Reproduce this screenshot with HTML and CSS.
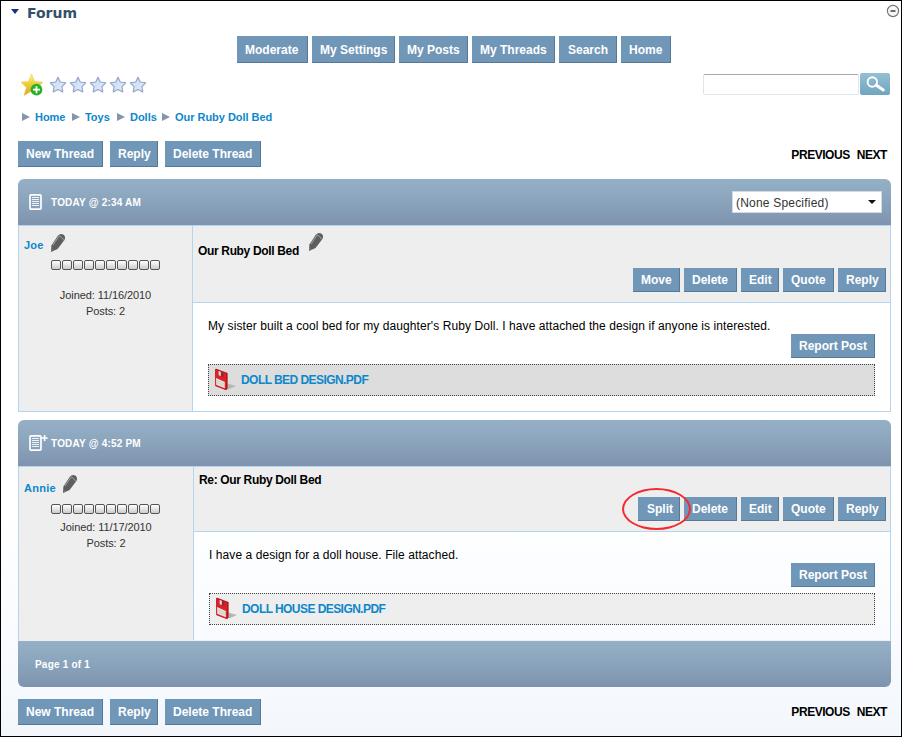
FILE: index.html
```
<!DOCTYPE html>
<html lang="en">
<head>
<meta charset="utf-8">
<title>Forum</title>
<link rel="stylesheet" href="styles.css">
</head>
<body>
<svg class="defs" aria-hidden="true">
  <defs>
    <linearGradient id="gold" x1="0" y1="0" x2="0" y2="1"><stop offset="0" stop-color="#fff3a0"/><stop offset=".45" stop-color="#efcf35"/><stop offset="1" stop-color="#dba520"/></linearGradient>
    <linearGradient id="pale" x1="0" y1="0" x2="1" y2="1"><stop offset="0" stop-color="#c6d7ef"/><stop offset="1" stop-color="#e6eefa"/></linearGradient>
    <symbol id="star" viewBox="0 0 18 18"><path d="M9 1.2 11.3 6 16.7 6.8 12.9 10.6 13.8 16 9 13.5 4.2 16 5.1 10.6 1.3 6.8 6.7 6Z" fill="url(#pale)" stroke="#8fa3cb" stroke-width="1.1" stroke-linejoin="round"/></symbol>
    <symbol id="pencil" viewBox="0 0 16 20"><path d="M1 19 1.4 12.6 8 2.6Q10.5-.2 13.6 1.8 16 3.8 14.4 7L7.6 16Z" fill="#5e5e5e"/><path d="M8.2 2.8Q12 3.4 13.8 7.4M3 12 8.6 3.8" fill="none" stroke="#aaa" stroke-width=".9"/><path d="M1.2 15.5 3.8 17.2 1 19Z" fill="#777"/></symbol>
    <symbol id="disk" viewBox="0 0 24 24"><path d="M13 15.5 22 18 14 21.5Z" fill="#b5b5b5"/><path d="M1 1.2 2.2.8 13.6 5V20.6L12.2 22.2 1.4 18Z" fill="#b8141c"/><path d="M1 1.6 12 5.6V22L1.4 18Z" fill="#dc2129"/><path d="M4.6 3 9.6 4.9V9.2L4.6 7.2Z" fill="#8e2c31"/><path d="M4.6 3 6.8 3.8V8L4.6 7.2Z" fill="#e9dcdc"/><path d="M2 10 10.8 14V20.2L2.2 16.8Z" fill="#e6e6e0"/><path d="M2 12.2 10.8 16M2 14.4 10.8 18" stroke="#bdbdb8" stroke-width=".7"/></symbol>
    <symbol id="page" viewBox="0 0 20 18"><rect x="2" y="1.9" width="11" height="14.2" rx="1" fill="none" stroke="#fff" stroke-width="1.7"/><path d="M4 4.5h7M4 6.5h7M4 8.5h7M4 10.5h7M4 12.5h7" stroke="#eef3f8" stroke-width="1"/></symbol>
  </defs>
</svg>
<header class="module-title">
  <span class="toggle"></span><h1>Forum</h1>
  <svg class="minimize" viewBox="0 0 14 14"><circle cx="7" cy="7" r="5.6" fill="#f7f7f7" stroke="#777" stroke-width="1.2"/><path d="M4.5 7h5" stroke="#222" stroke-width="1.3"/></svg>
</header>
<nav class="menu">
  <a class="btn w71">Moderate</a><a class="btn w83">My Settings</a><a class="btn w69">My Posts</a><a class="btn w83">My Threads</a><a class="btn w58 search-link">Search</a><a class="btn w50">Home</a>
</nav>
<div class="tools">
  <div class="rating">
    <svg class="favorite" viewBox="0 0 24 24"><path d="M11.5 1 14.6 8.6 23 9.2 16.7 14.5 18.4 22 11.5 18.1 4 22.5 6.4 14.5 1 9.2 8.5 8.6Z" fill="url(#gold)" stroke="#e7c94c" stroke-width=".6"/><circle cx="16.5" cy="16.7" r="5.9" fill="#27b028"/><path d="M16.5 13.2v7M13 16.7h7" stroke="#fff" stroke-width="1.8"/></svg>
    <svg class="star"><use href="#star"/></svg><svg class="star"><use href="#star"/></svg><svg class="star"><use href="#star"/></svg><svg class="star"><use href="#star"/></svg><svg class="star"><use href="#star"/></svg>
  </div>
  <div class="search"><input type="text" aria-label="Search"><button aria-label="Go"><svg viewBox="0 0 30 22"><circle cx="12.3" cy="9" r="4.7" fill="none" stroke="#fff" stroke-width="1.9"/><path d="M16.4 12.2 23.3 17" stroke="#fff" stroke-width="3" stroke-linecap="round"/></svg></button></div>
</div>
<div class="crumbs"><a class="c1">Home</a><a class="c2">Toys</a><a class="c3">Dolls</a><a>Our Ruby Doll Bed</a></div>
<div class="actions">
  <a class="btn w85">New Thread</a><a class="btn w48">Reply</a><a class="btn w96">Delete Thread</a>
  <div class="pager"><a>PREVIOUS</a><a>NEXT</a></div>
</div>

<article class="post first">
  <div class="bar"><svg class="page"><use href="#page"/></svg><span class="date">TODAY @ 2:34 AM</span><div class="select"><span>(None Specified)</span></div></div>
  <div class="row">
    <aside>
      <div class="author"><a>Joe</a><svg class="pencil"><use href="#pencil"/></svg></div>
      <div class="rank"><i></i><i></i><i></i><i></i><i></i><i></i><i></i><i></i><i></i><i></i></div>
      <p>Joined: 11/16/2010<br>Posts: 2</p>
    </aside>
    <section>
      <div class="head"><div class="subject">Our Ruby Doll Bed<svg class="pencil"><use href="#pencil"/></svg></div>
        <div class="buttons"><a class="btn w47">Move</a><a class="btn w53">Delete</a><a class="btn w38">Edit</a><a class="btn w51">Quote</a><a class="btn w48">Reply</a></div></div>
      <div class="content"><p>My sister built a cool bed for my daughter's Ruby Doll. I have attached the design if anyone is interested.</p><a class="btn w84 report">Report Post</a>
        <div class="file"><svg class="disk"><use href="#disk"/></svg><a>DOLL BED DESIGN.PDF</a></div></div>
    </section>
  </div>
</article>

<article class="post second">
  <div class="bar"><svg class="page" viewBox="0 0 20 18"><use href="#page" width="20" height="18"/><path d="M16.6 1v6M13.6 4h6" stroke="#fff" stroke-width="1.6"/></svg><span class="date">TODAY @ 4:52 PM</span></div>
  <div class="row">
    <aside>
      <div class="author"><a>Annie</a><svg class="pencil"><use href="#pencil"/></svg></div>
      <div class="rank"><i></i><i></i><i></i><i></i><i></i><i></i><i></i><i></i><i></i><i></i></div>
      <p>Joined: 11/17/2010<br>Posts: 2</p>
    </aside>
    <section>
      <div class="head"><div class="subject">Re: Our Ruby Doll Bed</div>
        <div class="buttons"><a class="btn w42">Split<span class="ring"></span></a><a class="btn w53">Delete</a><a class="btn w38">Edit</a><a class="btn w51">Quote</a><a class="btn w48">Reply</a></div></div>
      <div class="content"><p>I have a design for a doll house. File attached.</p><a class="btn w84 report">Report Post</a>
        <div class="file"><svg class="disk"><use href="#disk"/></svg><a>DOLL HOUSE DESIGN.PDF</a></div></div>
    </section>
  </div>
  <div class="bar foot">Page 1 of 1</div>
</article>
<div class="actions bottom">
  <a class="btn w85">New Thread</a><a class="btn w48">Reply</a><a class="btn w96">Delete Thread</a>
  <div class="pager"><a>PREVIOUS</a><a>NEXT</a></div>
</div>
</body>
</html>
```
FILE: styles.css
```
* { box-sizing: border-box; }
body {
  margin: 0; width: 902px; height: 737px; overflow: hidden;
  border: 1px solid #000;
  font: 12px/16px "Liberation Sans", Arial, sans-serif; color: #000;
  background: linear-gradient(#fff 0, #fff 500px, #f9fbfe 640px, #f3f7fc 735px);
}
p, h1 { margin: 0; }
svg { display: block; flex: none; }
.defs { position: absolute; width: 0; height: 0; }

.module-title { display: flex; height: 35px; padding: 0 1px 0 10px; align-items: flex-start; }
.toggle { border: 4px solid transparent; border-top: 5px solid #17357f; border-bottom: 0; margin-top: 8px; }
h1 { font: bold 14px/16px "DejaVu Sans", Verdana, sans-serif; color: #33506b; margin: 4px auto 0 8px; }
.minimize { width: 14px; height: 14px; margin-top: 3px; }

.btn {
  display: block; height: 24px; line-height: 24px; padding-left: 8px; flex: none; white-space: nowrap;
  background: #7197b8; color: #fff; font-weight: bold;
  border-right: 1px solid #587995; border-bottom: 1px solid #587995;
}
.w38 { width: 38px; } .w42 { width: 42px; } .w47 { width: 47px; } .w48 { width: 48px; }
.w50 { width: 50px; } .w51 { width: 51px; } .w53 { width: 53px; } .w58 { width: 58px; }
.w69 { width: 69px; } .w71 { width: 71px; } .w83 { width: 83px; } .w84 { width: 84px; }
.w85 { width: 85px; } .w96 { width: 96px; }

.menu { display: flex; gap: 4px; padding-left: 236px; height: 37px; }
.menu .btn { height: 27px; line-height: 28px; }
.menu .search-link { padding-left: 9px; }

.tools { display: flex; justify-content: space-between; height: 34px; padding: 0 11px 0 19px; }
.rating { display: flex; }
.favorite { width: 24px; height: 24px; margin-right: 4.5px; }
.star { width: 18px; height: 18px; margin: 2.5px 2px 0 0; }
.search { display: flex; gap: 1px; }
.search input { width: 156px; height: 21px; margin: 1px 0 0; padding: 0 4px; border: 1px solid #dfe4ea; border-top-color: #a9a9a9; border-radius: 2px; background: #fff; }
.search button { width: 30px; height: 22px; padding: 0; border: 0; border-radius: 2px; background: linear-gradient(#94bfd3, #70a5bf); }
.search svg { width: 30px; height: 22px; }

.crumbs { display: flex; height: 34px; padding-left: 21px; font-size: 11px; line-height: 21px; font-weight: bold; }
.crumbs a { display: flex; align-items: flex-start; color: #0d87cb; white-space: nowrap; letter-spacing: -.03px; }
.crumbs a::before { content: ""; margin: 6px 5px 0 0; border: 4px solid transparent; border-left: 8px solid #8496ad; border-right: 0; }
.c1, .c2, .c3 { flex: none; }
.c1 { width: 50px; } .c2 { width: 45px; } .c3 { width: 45px; }

.actions { display: flex; gap: 7px; height: 38px; padding: 0 3px 0 17px; }
.actions .btn { height: 26px; line-height: 27px; }
.pager { display: flex; gap: 7px; margin-left: auto; padding-right: 11px; line-height: 29px; font-weight: bold; letter-spacing: -.45px; }

.post { margin-left: 17px; width: 873px; }
.first { height: 241px; }
.bar { display: flex; align-items: center; height: 46px; border-radius: 6px 6px 0 0; padding: 0 9px 0 10px; color: #fff; font-size: 10px; font-weight: bold; background: linear-gradient(#94b0c6, #8ba5bd 45%, #7f93af); }
.page { width: 20px; height: 18px; margin-right: 3px; }
.date { letter-spacing: .2px; padding-top: 2px; }
.select { margin-left: auto; display: flex; align-items: center; justify-content: space-between; width: 150px; height: 22px; padding: 0 5px 0 3px; border: 1px solid #d2d9e3; background: #fff; color: #333; font-size: 12px; font-weight: normal; letter-spacing: .2px; }
.select span { padding-top: 2px; }
.select::after { content: ""; border: 4px solid transparent; border-top: 4px solid #111; border-bottom: 0; }
.row { display: flex; border: 1px solid #b3d5f0; height: 187px; }
aside { width: 174px; flex: none; background: #eee; border-right: 1px solid #b3d5f0; }
.first .row { background: #fff; }
.author { display: flex; height: 32px; padding: 5px 0 0 5px; font-size: 11px; font-weight: bold; }
.author a { color: #0d87cb; letter-spacing: .25px; padding-top: 6px; }
.pencil { width: 16px; height: 20px; }
.author .pencil { margin: 2px 0 0 6px; }
.rank { display: flex; gap: 1px; padding-left: 32px; height: 13px; margin-top: 2px; }
.rank i { width: 10px; height: 10px; border: 1px solid #555; border-radius: 2px; background: linear-gradient(#fff, #ccc); }
aside p { text-align: center; font-size: 11px; color: #333; letter-spacing: -.08px; margin-top: 14px; }
section { flex: 1; min-width: 0; }
.head { height: 77px; background: #eee; border-bottom: 1px solid #b3d5f0; padding: 6px 4px 0 5px; }
.subject { display: flex; height: 36px; line-height: 38px; font-weight: bold; letter-spacing: -.34px; }
.subject .pencil { margin: 0 0 0 9px; }
.buttons { display: flex; gap: 4px; justify-content: flex-end; }
.content { padding: 15px 15px 0; }
.content p { letter-spacing: .08px; }
.report { margin-left: auto; }
.file { display: flex; align-items: center; height: 32px; margin-top: 6px; padding-left: 5px; border: 1px dotted #444; background: #ddd; font-weight: bold; color: #0d87cb; }
.file a { letter-spacing: -.56px; }
.disk { width: 24px; height: 24px; margin-right: 3px; }

.second .row { height: 175px; border-bottom-color: #eee; }
.second aside { width: 175px; }
.second .author { height: 34px; padding-top: 7px; }
.second .author a { padding-top: 6px; }
.second .author .pencil { margin-top: 0; }
.second .rank { margin-top: 3px; }
.second aside p { margin-top: 2px; }
.second .head { height: 65px; padding-top: 0; }
.second .subject { height: 30px; line-height: 26px; }
.second .file { background: #eee; }
.second .btn { position: relative; }
.second .buttons .btn:first-child { z-index: 1; padding-left: 9px; }
.ring { position: absolute; left: -16px; top: -9px; width: 69px; height: 42px; border: 2px solid #f42a30; border-radius: 50%; }
.foot { padding: 2px 0 0 17px; border-radius: 0 0 6px 6px; letter-spacing: .2px; }
.bottom { padding-top: 12px; }
.bottom .pager { line-height: 27px; }
```
